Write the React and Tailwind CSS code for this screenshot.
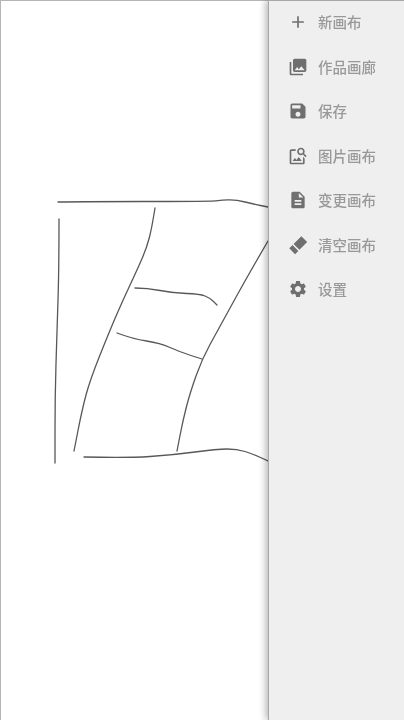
import React from 'react';

const menu = [
  { label: '新画布', d: 'M19 13h-6v6h-2v-6H5v-2h6V5h2v6h6v2z' },
  { label: '作品画廊', d: 'M22 16V4c0-1.1-.9-2-2-2H8c-1.1 0-2 .9-2 2v12c0 1.1.9 2 2 2h12c1.1 0 2-.9 2-2zm-11-4l2.03 2.71L16 11l4 5H8l3-4zM2 6v14c0 1.1.9 2 2 2h14v-2H4V6H2z' },
  { label: '保存', d: 'M17 3H5c-1.11 0-2 .9-2 2v14c0 1.1.89 2 2 2h14c1.1 0 2-.9 2-2V7l-4-4zm-5 16c-1.66 0-3-1.34-3-3s1.34-3 3-3 3 1.34 3 3-1.34 3-3 3zm3-10H5V5h10v4z' },
  { label: '图片画布', d: 'M18 13v7H4V6h5.02c.05-.71.22-1.38.48-2H4c-1.1 0-2 .9-2 2v14c0 1.1.9 2 2 2h14c1.1 0 2-.9 2-2v-5l-2-2zm-1.5 5h-11l2.75-3.53 1.96 2.36 2.75-3.54L16.5 18zm2.8-9.11c.44-.7.7-1.51.7-2.39C20 4.01 17.99 2 15.5 2S11 4.01 11 6.5s2.01 4.5 4.49 4.5c.88 0 1.7-.26 2.39-.7L21 13.42 22.42 12 19.3 8.89zM15.5 9C14.12 9 13 7.88 13 6.5S14.12 4 15.5 4 18 5.12 18 6.5 16.88 9 15.5 9z' },
  { label: '变更画布', d: 'M14 2H6c-1.1 0-1.99.9-1.99 2L4 20c0 1.1.89 2 1.99 2H18c1.1 0 2-.9 2-2V8l-6-6zm2 16H8v-2h8v2zm0-4H8v-2h8v2zm-3-5V3.5L18.5 9H13z' },
  { label: '清空画布', d: 'M1.5 16L5.4 12.1 12.4 19.1 8.5 23ZM6.7 10.8L16 1.5 23 8.5 13.7 17.8Z' },
  { label: '设置', d: 'M19.14 12.94c.04-.3.06-.61.06-.94 0-.32-.02-.64-.07-.94l2.03-1.58c.18-.14.23-.41.12-.61l-1.92-3.32c-.12-.22-.37-.29-.59-.22l-2.39.96c-.5-.38-1.03-.7-1.62-.94l-.36-2.54c-.04-.24-.24-.41-.48-.41h-3.84c-.24 0-.43.17-.47.41l-.36 2.54c-.59.24-1.13.57-1.62.94l-2.39-.96c-.22-.08-.47 0-.59.22L2.74 8.87c-.12.21-.08.47.12.61l2.03 1.58c-.05.3-.09.63-.09.94s.02.64.07.94l-2.03 1.58c-.18.14-.23.41-.12.61l1.92 3.32c.12.22.37.29.59.22l2.39-.96c.5.38 1.03.7 1.62.94l.36 2.54c.05.24.24.41.48.41h3.84c.24 0 .44-.17.47-.41l.36-2.54c.59-.24 1.13-.56 1.62-.94l2.39.96c.22.08.47 0 .59-.22l1.92-3.32c.12-.22.07-.47-.12-.61l-2.01-1.58zM12 15.6c-1.98 0-3.6-1.62-3.6-3.6s1.62-3.6 3.6-3.6 3.6 1.62 3.6 3.6-1.62 3.6-3.6 3.6z' },
];

// hand drawn strokes, in page coordinates
const strokes = [
  [[58, 202], [73, 201.5], [213, 201.5], [223, 199.7], [237, 200], [253, 204], [268, 207]],
  [[59, 219], [59, 270], [57, 330], [55, 397], [55, 463]],
  [[155, 208], [152, 227], [147, 247], [138, 268], [123, 300], [110, 330], [90, 380], [82, 410], [74, 451]],
  [[135, 288], [147, 288], [173, 293], [200, 294], [210, 298], [217, 305]],
  [[117, 333], [133, 339], [160, 343], [180, 352], [202, 359]],
  [[268, 241], [247, 277], [218, 330], [202, 359], [190, 393], [183, 420], [177, 451]],
  [[84, 457], [127, 458], [173, 455], [217, 449], [237, 449], [253, 454], [268, 461]],
];

const toPath = (pts) => {
  let d = `M${pts[0][0]} ${pts[0][1]}`;
  for (let i = 1; i < pts.length - 1; i++) {
    const mx = (pts[i][0] + pts[i + 1][0]) / 2;
    const my = (pts[i][1] + pts[i + 1][1]) / 2;
    d += ` Q${pts[i][0]} ${pts[i][1]} ${mx} ${my}`;
  }
  const last = pts[pts.length - 1];
  return `${d} L${last[0]} ${last[1]}`;
};

const App = () => {
  return (
    <div className="flex h-[720px] w-[404px] overflow-hidden bg-white font-['Noto_Sans_CJK_SC',sans-serif] blur-[0.4px]">
      <div className="h-full w-[268px] shrink-0 border-l border-t border-[#b5b5b5] bg-white">
        <svg className="-ml-px -mt-px block" width="268" height="720" viewBox="0 0 268 720" fill="none">
          {strokes.map((pts, i) => (
            <path key={i} d={toPath(pts)} stroke="#585858" strokeWidth="1.3" strokeLinecap="round" strokeLinejoin="round" />
          ))}
        </svg>
      </div>
      <aside className="relative z-10 h-full flex-1 border-l border-t border-[#a8a8a8] bg-[#efefef] shadow-[-2px_0_7px_rgba(0,0,0,0.3)]">
        <div className="-mt-[1px] flex flex-col">
          {menu.map((item) => (
            <div key={item.label} className="flex h-[44.5px] items-center pl-[19px]">
              <svg className="shrink-0 text-[#6f6f6f]" width="20" height="20" viewBox="0 0 24 24" fill="currentColor">
                <path d={item.d} />
              </svg>
              <span className="ml-[10px] text-[14.5px] font-medium text-[#999999]">{item.label}</span>
            </div>
          ))}
        </div>
      </aside>
    </div>
  );
};

export default App;
